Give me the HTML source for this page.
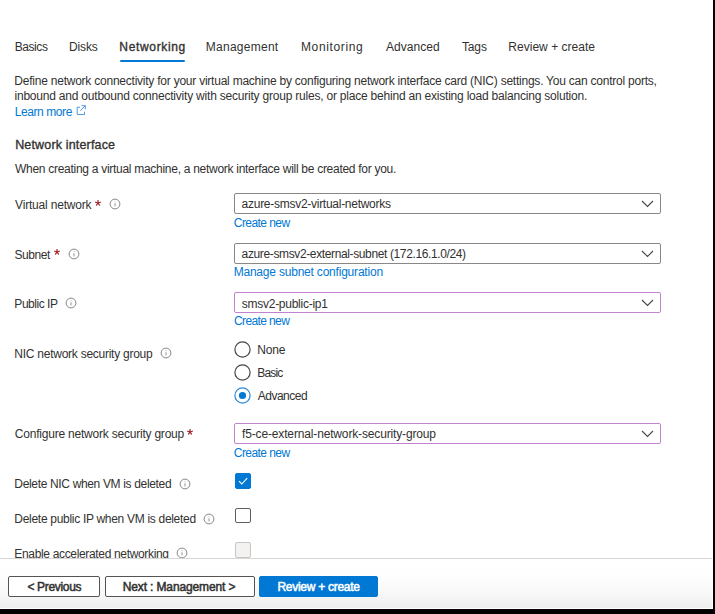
<!DOCTYPE html>
<html><head><meta charset="utf-8"><style>
html,body{margin:0;padding:0;}
body{width:715px;height:614px;position:relative;overflow:hidden;background:#fff;font-family:"Liberation Sans",sans-serif;}
.t{position:absolute;white-space:pre;}
.ic{position:absolute;}
.star{position:absolute;font:bold 14px "Liberation Sans",sans-serif;line-height:13px;color:#a4262c;}
.dd{position:absolute;left:234px;width:427px;box-sizing:border-box;border-radius:2px;background:#fff;}
.chev{position:absolute;}
.cb{position:absolute;left:235px;width:15.5px;height:15.5px;box-sizing:border-box;border:1.2px solid #605e5c;border-radius:2px;background:#fff;}
.foot{position:absolute;z-index:5;left:0;top:557.5px;width:712px;height:51.5px;border-top:1.3px solid #d8d6d4;box-shadow:0 -0.5px 0.5px #eeeeee;box-sizing:border-box;background:linear-gradient(#fff 0%,#fefefe 35%,#f7f7f7 70%,#efefef 97.5%,#fff 97.5%);}
.btn{position:absolute;z-index:6;top:576.2px;height:20.8px;box-sizing:border-box;border:1.3px solid #555453;border-radius:2px;background:#fff;}
.blk{position:absolute;background:#000;}
</style></head><body>
<div class="foot"></div><div class="btn" style="left:8.2px;width:92px"></div><div class="btn" style="left:105px;width:149.5px"></div><div class="btn" style="left:259px;width:119px;background:#0078d4;border-color:#0078d4"></div>
<div style="position:absolute;left:119.5px;top:59.7px;width:65.8px;height:2.1px;border-radius:1px;background:#0078d4"></div><svg class="ic" style="left:75px;top:104px" width="12" height="12" viewBox="0 0 12 12"><path d="M5 3.2H2.2v7.3h7.3V7.7" fill="none" stroke="#3b8ede" stroke-width="0.9"/><path d="M6.6 1.7h3.7v3.7M10.3 1.7 5.2 6.8" fill="none" stroke="#3b8ede" stroke-width="0.9"/></svg><svg class="ic" style="left:94.40px;top:198.50px" width="8" height="8" viewBox="0 0 8 8"><line x1="4" y1="4" x2="4.00" y2="1.50" stroke="#a4262c" stroke-width="1.25" stroke-linecap="round"/><line x1="4" y1="4" x2="6.38" y2="3.23" stroke="#a4262c" stroke-width="1.25" stroke-linecap="round"/><line x1="4" y1="4" x2="5.47" y2="6.02" stroke="#a4262c" stroke-width="1.25" stroke-linecap="round"/><line x1="4" y1="4" x2="2.53" y2="6.02" stroke="#a4262c" stroke-width="1.25" stroke-linecap="round"/><line x1="4" y1="4" x2="1.62" y2="3.23" stroke="#a4262c" stroke-width="1.25" stroke-linecap="round"/></svg><svg class="ic" style="left:108.8px;top:198.2px" width="12" height="12" viewBox="0 0 12 12"><circle cx="6" cy="6" r="4.9" fill="none" stroke="#8a8886" stroke-width="1"/><line x1="6" y1="5.2" x2="6" y2="8.4" stroke="#8a8886" stroke-width="0.9"/><circle cx="6" cy="3.6" r="0.5" fill="#a19f9d"/></svg><svg class="ic" style="left:53.40px;top:248.00px" width="8" height="8" viewBox="0 0 8 8"><line x1="4" y1="4" x2="4.00" y2="1.50" stroke="#a4262c" stroke-width="1.25" stroke-linecap="round"/><line x1="4" y1="4" x2="6.38" y2="3.23" stroke="#a4262c" stroke-width="1.25" stroke-linecap="round"/><line x1="4" y1="4" x2="5.47" y2="6.02" stroke="#a4262c" stroke-width="1.25" stroke-linecap="round"/><line x1="4" y1="4" x2="2.53" y2="6.02" stroke="#a4262c" stroke-width="1.25" stroke-linecap="round"/><line x1="4" y1="4" x2="1.62" y2="3.23" stroke="#a4262c" stroke-width="1.25" stroke-linecap="round"/></svg><svg class="ic" style="left:67.5px;top:248px" width="12" height="12" viewBox="0 0 12 12"><circle cx="6" cy="6" r="4.9" fill="none" stroke="#8a8886" stroke-width="1"/><line x1="6" y1="5.2" x2="6" y2="8.4" stroke="#8a8886" stroke-width="0.9"/><circle cx="6" cy="3.6" r="0.5" fill="#a19f9d"/></svg><svg class="ic" style="left:65.4px;top:297.4px" width="12" height="12" viewBox="0 0 12 12"><circle cx="6" cy="6" r="4.9" fill="none" stroke="#8a8886" stroke-width="1"/><line x1="6" y1="5.2" x2="6" y2="8.4" stroke="#8a8886" stroke-width="0.9"/><circle cx="6" cy="3.6" r="0.5" fill="#a19f9d"/></svg><svg class="ic" style="left:160.4px;top:347.3px" width="12" height="12" viewBox="0 0 12 12"><circle cx="6" cy="6" r="4.9" fill="none" stroke="#8a8886" stroke-width="1"/><line x1="6" y1="5.2" x2="6" y2="8.4" stroke="#8a8886" stroke-width="0.9"/><circle cx="6" cy="3.6" r="0.5" fill="#a19f9d"/></svg><svg class="ic" style="left:186.30px;top:427.80px" width="8" height="8" viewBox="0 0 8 8"><line x1="4" y1="4" x2="4.00" y2="1.50" stroke="#a4262c" stroke-width="1.25" stroke-linecap="round"/><line x1="4" y1="4" x2="6.38" y2="3.23" stroke="#a4262c" stroke-width="1.25" stroke-linecap="round"/><line x1="4" y1="4" x2="5.47" y2="6.02" stroke="#a4262c" stroke-width="1.25" stroke-linecap="round"/><line x1="4" y1="4" x2="2.53" y2="6.02" stroke="#a4262c" stroke-width="1.25" stroke-linecap="round"/><line x1="4" y1="4" x2="1.62" y2="3.23" stroke="#a4262c" stroke-width="1.25" stroke-linecap="round"/></svg><svg class="ic" style="left:178.5px;top:477.5px" width="12" height="12" viewBox="0 0 12 12"><circle cx="6" cy="6" r="4.9" fill="none" stroke="#8a8886" stroke-width="1"/><line x1="6" y1="5.2" x2="6" y2="8.4" stroke="#8a8886" stroke-width="0.9"/><circle cx="6" cy="3.6" r="0.5" fill="#a19f9d"/></svg><svg class="ic" style="left:203.2px;top:512.5px" width="12" height="12" viewBox="0 0 12 12"><circle cx="6" cy="6" r="4.9" fill="none" stroke="#8a8886" stroke-width="1"/><line x1="6" y1="5.2" x2="6" y2="8.4" stroke="#8a8886" stroke-width="0.9"/><circle cx="6" cy="3.6" r="0.5" fill="#a19f9d"/></svg><svg class="ic" style="left:176px;top:547px" width="12" height="12" viewBox="0 0 12 12"><circle cx="6" cy="6" r="4.9" fill="none" stroke="#8a8886" stroke-width="1"/><line x1="6" y1="5.2" x2="6" y2="8.4" stroke="#8a8886" stroke-width="0.9"/><circle cx="6" cy="3.6" r="0.5" fill="#a19f9d"/></svg><div class="dd" style="top:193px;height:21px;border:1px solid #8a8886"></div><svg class="chev" style="left:641px;top:200.0px" width="13" height="8" viewBox="0 0 13 8"><polyline points="1,1 6.5,6.5 12,1" fill="none" stroke="#484644" stroke-width="1.1"/></svg><div class="dd" style="top:243px;height:20.5px;border:1px solid #8a8886"></div><svg class="chev" style="left:641px;top:249.75px" width="13" height="8" viewBox="0 0 13 8"><polyline points="1,1 6.5,6.5 12,1" fill="none" stroke="#484644" stroke-width="1.1"/></svg><div class="dd" style="top:292px;height:21.2px;border:1.75px solid #c083d0"></div><svg class="chev" style="left:641px;top:299.1px" width="13" height="8" viewBox="0 0 13 8"><polyline points="1,1 6.5,6.5 12,1" fill="none" stroke="#484644" stroke-width="1.1"/></svg><div class="dd" style="top:423px;height:20.5px;border:1.75px solid #c083d0"></div><svg class="chev" style="left:641px;top:429.75px" width="13" height="8" viewBox="0 0 13 8"><polyline points="1,1 6.5,6.5 12,1" fill="none" stroke="#484644" stroke-width="1.1"/></svg><svg class="ic" style="left:234.4px;top:340.9px" width="17" height="17" viewBox="0 0 17 17"><circle cx="8.5" cy="8.5" r="7.6" fill="#fff" stroke="#484644" stroke-width="1.2"/></svg><svg class="ic" style="left:234.4px;top:363.7px" width="17" height="17" viewBox="0 0 17 17"><circle cx="8.5" cy="8.5" r="7.6" fill="#fff" stroke="#484644" stroke-width="1.2"/></svg><svg class="ic" style="left:234.4px;top:386.7px" width="17" height="17" viewBox="0 0 17 17"><circle cx="8.5" cy="8.5" r="7.6" fill="#fff" stroke="#2b88d8" stroke-width="1.2"/><circle cx="8.5" cy="8.5" r="3.6" fill="#0078d4"/></svg><div class="cb" style="top:473px;background:#0078d4;border-color:#0078d4"><svg width="16" height="16" viewBox="0 0 16 16" style="position:absolute;left:-1px;top:-1px"><polyline points="4,8.2 6.8,11 12.2,5.2" fill="none" stroke="#fff" stroke-width="1.1"/></svg></div><div class="cb" style="top:507.5px;border-color:#605e5c"></div><div class="cb" style="top:542px;background:#f3f2f1;border-color:#c8c6c4"></div>
<div class="t" id="t0" style="left:14.65px;top:41.00px;font-size:12px;line-height:12px;font-weight:normal;color:#323130;letter-spacing:-0.419px">Basics</div>
<div class="t" id="t1" style="left:68.95px;top:41.00px;font-size:12px;line-height:12px;font-weight:normal;color:#323130;letter-spacing:-0.113px">Disks</div>
<div class="t" id="t2" style="left:119.32px;top:41.00px;font-size:12px;line-height:12px;font-weight:normal;-webkit-text-stroke:0.35px currentColor;color:#323130;letter-spacing:0.661px">Networking</div>
<div class="t" id="t3" style="left:205.74px;top:41.00px;font-size:12px;line-height:12px;font-weight:normal;color:#323130;letter-spacing:0.268px">Management</div>
<div class="t" id="t4" style="left:300.95px;top:41.00px;font-size:12px;line-height:12px;font-weight:normal;color:#323130;letter-spacing:0.636px">Monitoring</div>
<div class="t" id="t5" style="left:385.95px;top:41.00px;font-size:12px;line-height:12px;font-weight:normal;color:#323130;letter-spacing:0.045px">Advanced</div>
<div class="t" id="t6" style="left:461.91px;top:41.00px;font-size:12px;line-height:12px;font-weight:normal;color:#323130;letter-spacing:-0.110px">Tags</div>
<div class="t" id="t7" style="left:508.36px;top:41.00px;font-size:12px;line-height:12px;font-weight:normal;color:#323130;letter-spacing:0.017px">Review + create</div>
<div class="t" id="t8" style="left:14.36px;top:75.00px;font-size:12px;line-height:12px;font-weight:normal;color:#323130;letter-spacing:-0.233px">Define network connectivity for your virtual machine by configuring network interface card (NIC) settings. You can control ports,</div>
<div class="t" id="t9" style="left:14.48px;top:90.00px;font-size:12px;line-height:12px;font-weight:normal;color:#323130;letter-spacing:-0.211px">inbound and outbound connectivity with security group rules, or place behind an existing load balancing solution.</div>
<div class="t" id="t10" style="left:14.74px;top:106.00px;font-size:12px;line-height:12px;font-weight:normal;color:#0078d4;letter-spacing:-0.421px">Learn more</div>
<div class="t" id="t11" style="left:15.14px;top:139.00px;font-size:12.5px;line-height:12.5px;font-weight:normal;-webkit-text-stroke:0.35px currentColor;color:#323130;letter-spacing:0.167px">Network interface</div>
<div class="t" id="t12" style="left:15.02px;top:163.00px;font-size:12px;line-height:12px;font-weight:normal;color:#323130;letter-spacing:-0.284px">When creating a virtual machine, a network interface will be created for you.</div>
<div class="t" id="t13" style="left:15.09px;top:199.00px;font-size:12px;line-height:12px;font-weight:normal;color:#323130;letter-spacing:-0.186px">Virtual network</div>
<div class="t" id="t14" style="left:14.41px;top:249.00px;font-size:12px;line-height:12px;font-weight:normal;color:#323130;letter-spacing:-0.430px">Subnet</div>
<div class="t" id="t15" style="left:14.36px;top:298.00px;font-size:12px;line-height:12px;font-weight:normal;color:#323130;letter-spacing:-0.474px">Public IP</div>
<div class="t" id="t16" style="left:14.36px;top:348.00px;font-size:12px;line-height:12px;font-weight:normal;color:#323130;letter-spacing:-0.256px">NIC network security group</div>
<div class="t" id="t17" style="left:14.86px;top:428.00px;font-size:12px;line-height:12px;font-weight:normal;color:#323130;letter-spacing:-0.217px">Configure network security group</div>
<div class="t" id="t18" style="left:14.36px;top:478.00px;font-size:12px;line-height:12px;font-weight:normal;color:#323130;letter-spacing:-0.341px">Delete NIC when VM is deleted</div>
<div class="t" id="t19" style="left:14.36px;top:513.00px;font-size:12px;line-height:12px;font-weight:normal;color:#323130;letter-spacing:-0.299px">Delete public IP when VM is deleted</div>
<div class="t" id="t20" style="left:14.36px;top:548.00px;font-size:12px;line-height:12px;font-weight:normal;color:#323130;letter-spacing:-0.338px">Enable accelerated networking</div>
<div class="t" id="t21" style="left:241.62px;top:198.00px;font-size:12px;line-height:12px;font-weight:normal;color:#323130;letter-spacing:-0.272px">azure-smsv2-virtual-networks</div>
<div class="t" id="t22" style="left:241.62px;top:248.00px;font-size:12px;line-height:12px;font-weight:normal;color:#323130;letter-spacing:-0.372px">azure-smsv2-external-subnet (172.16.1.0/24)</div>
<div class="t" id="t23" style="left:241.78px;top:298.00px;font-size:12px;line-height:12px;font-weight:normal;color:#323130;letter-spacing:-0.260px">smsv2-public-ip1</div>
<div class="t" id="t24" style="left:242.04px;top:428.00px;font-size:12px;line-height:12px;font-weight:normal;color:#323130;letter-spacing:-0.151px">f5-ce-external-network-security-group</div>
<div class="t" id="t25" style="left:233.82px;top:217.00px;font-size:12px;line-height:12px;font-weight:normal;color:#0078d4;letter-spacing:-0.567px">Create new</div>
<div class="t" id="t26" style="left:233.65px;top:266.00px;font-size:12px;line-height:12px;font-weight:normal;color:#0078d4;letter-spacing:-0.205px">Manage subnet configuration</div>
<div class="t" id="t27" style="left:234.05px;top:315.00px;font-size:12px;line-height:12px;font-weight:normal;color:#0078d4;letter-spacing:-0.622px">Create new</div>
<div class="t" id="t28" style="left:233.82px;top:447.00px;font-size:12px;line-height:12px;font-weight:normal;color:#0078d4;letter-spacing:-0.567px">Create new</div>
<div class="t" id="t29" style="left:257.28px;top:344.00px;font-size:12px;line-height:12px;font-weight:normal;color:#323130;letter-spacing:-0.177px">None</div>
<div class="t" id="t30" style="left:257.28px;top:367.00px;font-size:12px;line-height:12px;font-weight:normal;color:#323130;letter-spacing:-0.845px">Basic</div>
<div class="t" id="t31" style="left:257.81px;top:390.00px;font-size:12px;line-height:12px;font-weight:normal;color:#323130;letter-spacing:-0.508px">Advanced</div>
<div class="t" id="t32" style="z-index:7;left:27.38px;top:581.00px;font-size:12px;line-height:12px;font-weight:normal;-webkit-text-stroke:0.5px currentColor;color:#323130;letter-spacing:-0.315px">&lt; Previous</div>
<div class="t" id="t33" style="z-index:7;left:122.75px;top:581.00px;font-size:12px;line-height:12px;font-weight:normal;-webkit-text-stroke:0.5px currentColor;color:#323130;letter-spacing:-0.132px">Next : Management &gt;</div>
<div class="t" id="t34" style="z-index:7;left:277.43px;top:581.00px;font-size:12px;line-height:12px;font-weight:normal;-webkit-text-stroke:0.5px currentColor;color:#ffffff;letter-spacing:-0.271px">Review + create</div>
<div class="blk" style="left:713px;top:0;width:2px;height:614px"></div><div class="blk" style="left:0;top:609px;width:715px;height:5px"></div>
</body></html>
